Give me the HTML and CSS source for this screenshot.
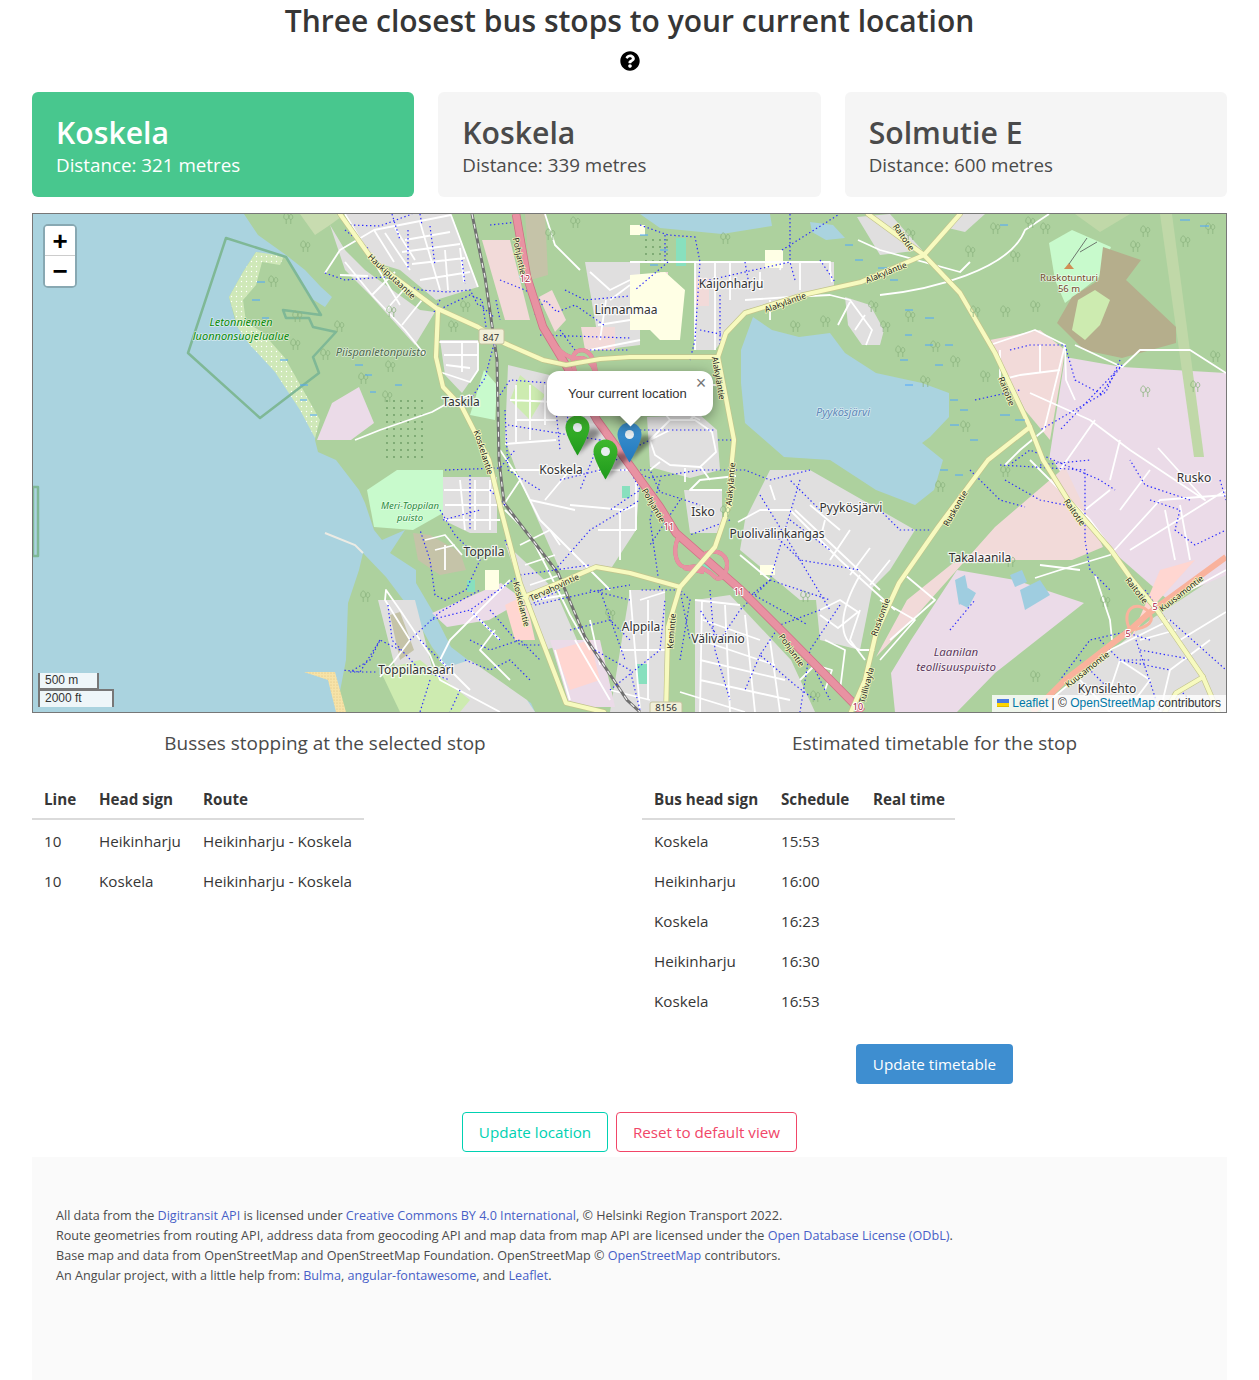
FILE: index.html
```html
<!DOCTYPE html>
<html lang="en">
<head>
  <meta charset="UTF-8">
  <meta name="viewport" content="width=device-width, initial-scale=1.0">
  <title>Bus stops</title>
  <link rel="stylesheet" href="styles.css">
</head>
<body>
  <div class="page">
    <h1 class="title">Three closest bus stops to your current location</h1>
    <div class="help">
      <svg class="help-icon" viewBox="0 0 512 512"><path d="M504 256c0 136.997-111.043 248-248 248S8 392.997 8 256C8 119.083 119.043 8 256 8s248 111.083 248 248zM262.655 90c-54.497 0-89.255 22.957-116.549 63.758-3.536 5.286-2.353 12.415 2.715 16.258l34.699 26.31c5.205 3.947 12.621 3.008 16.665-2.122 17.864-22.658 30.113-35.797 57.303-35.797 20.429 0 45.698 13.148 45.698 32.958 0 14.976-12.363 22.667-32.534 33.976C247.128 238.528 216 254.941 216 296v4c0 6.627 5.373 12 12 12h56c6.627 0 12-5.373 12-12v-1.333c0-28.462 83.186-29.647 83.186-106.667 0-58.002-60.165-102-116.531-102zM256 338c-25.365 0-46 20.635-46 46 0 25.364 20.635 46 46 46s46-20.636 46-46c0-25.365-20.635-46-46-46z"/></svg>
    </div>

    <div class="stops">
      <div class="stop selected">
        <div class="stop-name">Koskela</div>
        <div class="stop-dist">Distance: 321 metres</div>
      </div>
      <div class="stop">
        <div class="stop-name">Koskela</div>
        <div class="stop-dist">Distance: 339 metres</div>
      </div>
      <div class="stop">
        <div class="stop-name">Solmutie E</div>
        <div class="stop-dist">Distance: 600 metres</div>
      </div>
    </div>

    <div class="map">
      <svg class="tiles" viewBox="33 214 1193 498">
        <defs>
          <symbol id="tree" viewBox="0 0 12 14" overflow="visible">
            <path class="tree" d="M3.5 13V8M3.5 8C1 8 .5 6 1 4 1.5 2 2.5 1 3.5 1 4.5 1 5.5 2 6 4 6.5 6 6 8 3.5 8zM8.5 13V8M8.5 8C6.5 8 6.3 6 7 4.5 7.5 3 8 2.5 8.5 2.5 9 2.5 10 3 10.5 4.5 11 6 10.5 8 8.5 8z"/>
          </symbol>
          <symbol id="pin" viewBox="0 0 25 41" overflow="visible">
            <path d="M12.5.5C5.9.5.5 5.9.5 12.5.5 21 12.5 40.5 12.5 40.5S24.5 21 24.5 12.5C24.5 5.9 19.1.5 12.5.5z"/>
            <circle class="pin-dot" cx="12.5" cy="12.5" r="4.5"/>
          </symbol>
          <linearGradient id="green-pin" x1="0" y1="0" x2="0" y2="1">
            <stop offset="0" stop-color="#3fb82e"/>
            <stop offset="1" stop-color="#1f9a1c"/>
          </linearGradient>
          <linearGradient id="blue-pin" x1="0" y1="0" x2="0" y2="1">
            <stop offset="0" stop-color="#3f93d1"/>
            <stop offset="1" stop-color="#2178bd"/>
          </linearGradient>
          <filter id="blur"><feGaussianBlur stdDeviation="2"/></filter>
          <pattern id="dots" width="7" height="7" patternUnits="userSpaceOnUse"><rect width="7" height="7" fill="#add19e"/><circle cx="2" cy="2" r=".7" fill="#2f6a2f"/></pattern>
          <pattern id="marsh" width="5" height="5" patternUnits="userSpaceOnUse"><rect width="5" height="5" fill="#cfe8b8"/><circle cx="1.5" cy="1.5" r=".7" fill="#fff"/></pattern>
          <pattern id="sand" width="3" height="3" patternUnits="userSpaceOnUse"><rect width="3" height="3" fill="#f7e3a8"/><circle cx="1" cy="1" r=".4" fill="#b89a50"/></pattern>
        </defs>

        <rect class="wood" x="33" y="214" width="1193" height="498"/>

        <!-- water -->
        <path class="water" d="M33 214H244L258 235 286 255 305 270 321 287 332 297 325 307 309 297 286 258 256 252 243 272 229 297 237 327 262 340 275 350 298 383 317 417 315 440 318 452 336 460 359 490 365 503 374 530 382 540 405 530 390 553 416 570 416 583 436 617 451 647 485 673 531 703 535 712H33z"/>
        <path class="wood" d="M363 553 386 577 413 613 432 647 447 667 462 690 520 712H336L346 660 348 603 359 570z"/>
        <path class="pier" d="M325 533 355 545 363 553"/>
        <path class="water" d="M640 214H770L772 226 722 234 660 228z"/>
        <path class="water" d="M810 222 833 225 845 238 826 240 812 232z"/>
        <path class="water" d="M753 317 772 330 799 337 830 333 845 353 876 373 922 383 949 393 949 417 930 437 922 443 943 460 934 490 915 505 876 490 830 460 784 457 745 423 741 383 741 350z"/>
        <path class="water" d="M1100 270 1108 272 1111 277 1103 276zM1105 330h5l4 18-8 1z"/>
        <path class="marsh" d="M256 252 284 256 280 265 262 262 256 285 243 300 246 322 262 332 285 358 302 388 320 420 315 438 300 410 275 372 250 345 238 328 229 297 243 272z"/>
        <path class="light" d="M330 225 345 214H300L315 235z"/>

        <!-- land use -->
        <path class="res" d="M345 214H451L478 287 436 300 400 270 374 262z"/>
        <path class="res" d="M330 225 345 250 365 270 420 310 435 312 415 345 370 295 345 270z"/>
        <path class="res" d="M440 340H478L478 370 462 393 445 375z"/>
        <path class="res" d="M508 365 570 380 600 430 640 480 636 530 610 570 560 570 520 480 505 440z"/>
        <path class="res" d="M647 417 700 415 717 430 720 470 690 478 650 467z"/>
        <path class="res" d="M684 490 722 490 722 533 690 533z"/>
        <path class="res" d="M770 470 810 470 915 530 890 570 860 600 800 600 740 550 745 520z"/>
        <path class="res" d="M695 600 730 595 791 660 815 712H695z"/>
        <path class="res" d="M630 590 665 590 665 712H610z"/>
        <path class="res" d="M585 262H640V345L600 350z"/>
        <path class="res" d="M695 262H834V290L790 300 745 310 715 350H695z"/>
        <path class="res" d="M857 217 890 214 922 250 880 255z"/>
        <path class="res" d="M845 297 870 305 884 330 880 345 862 345 848 325z"/>
        <path class="res" d="M443 477 497 477 497 533 470 533 443 520z"/>
        <path class="res" d="M505 543 555 590 577 640 545 650 525 600z"/>
        <path class="res" d="M378 600 415 600 432 667 395 667z"/>
        <path class="res" d="M416 677 470 660 527 700 535 712H420z"/>
        <path class="res" d="M1050 700 1150 620 1226 570V712H1040z"/>
        <path class="res" d="M815 590 875 575 860 650 820 640z"/>
        <path class="res" d="M1182 395H1226V440H1195z"/>
        <path class="res" d="M960 214 985 214 965 232 948 228z"/>

        <path class="ind" d="M332 403 359 387 374 423 351 440 317 440z"/>
        <path class="ind" d="M432 613 501 583 524 600 489 620 447 627z"/>
        <path class="ind" d="M550 640 600 640 615 707 570 707z"/>
        <path class="ind" d="M891 673 911 640 957 570 1015 580 1084 603 995 673 957 712H895z"/>
        <path class="ind" d="M1053 460H1226V575L1168 600 1103 543z"/>
        <path class="ind" d="M1065 357 1122 367 1226 373V460H1049z"/>

        <path class="com" d="M876 657 915 617 995 527 1065 467 1103 547 1072 560 1015 560 953 563 907 600z"/>
        <path class="com" d="M990 340 1040 330 1065 350 1062 370 1050 440 1025 410z"/>
        <path class="com" d="M482 240 510 240 530 320 505 320z"/>
        <path class="com" d="M539 297 552 290 566 320 555 332z"/>
        <path class="com" d="M581 327 615 327 615 350 585 350z"/>
        <path class="com" d="M695 278h14v28h-14zM660 272h8v5h-8z"/>
        <path class="ret" d="M1130 640 1160 570 1195 560 1150 610z"/>
        <path class="ret" d="M505 605 525 595 535 640 515 640z"/>
        <path class="ret" d="M555 650 590 640 600 680 570 690z"/>

        <path class="park" d="M367 490 397 470 443 470 443 513 413 530 374 527z"/>
        <path class="park" d="M1049 243 1072 230 1111 247 1099 277 1065 303 1055 280z"/>
        <path class="park" d="M484 370 497 385 495 420 470 415z"/>
        <path class="grass" d="M380 670 420 660 470 700 460 712H400z"/>
        <path class="grass" d="M520 375 545 395 530 420 510 400z"/>
        <path class="strip" d="M1160 214 1172 214 1204 457 1194 457z"/>
        <path class="strip" d="M1075 214H1130L1100 232z"/>
        <path class="quarry" d="M1103 247 1141 260 1126 280 1176 327 1176 343 1122 358 1084 350 1057 323 1072 297 1099 280z"/>
        <path class="grass" d="M1078 300 1095 290 1110 300 1100 325 1085 340 1072 330z"/>
        <path class="brown" d="M525 214H545L548 275 530 280z"/>
        <path class="brown" d="M413 533 430 535 460 552 466 570 440 575 418 560z"/>
        <path class="brown" d="M390 615 400 612 414 650 400 660z"/>
        <path class="school" d="M630 275 665 272 685 290 680 340 660 340 650 330 630 330z"/>
        <path class="sport" d="M676 238h10v28h-10zM637 664h10v20h-10zM622 486h8v12h-8zM702 560h12v10h-12zM467 580h8v12h-8z"/>
        <path class="school" d="M765 250h18v18h-18zM598 460h12v12h-12zM760 565h15v10h-15zM485 570h14v20h-14zM630 225h15v10h-15z"/>
        <path class="sand" d="M304 672H335L346 712H336L328 680z"/>
        <path class="water-mid" d="M955 580l10-5 4 20-10 10zM968 588l8 5-8 15-8-4zM1020 590l20-10 10 15-25 15zM1010 575l12-5 5 12-12 5z"/>
        <rect x="382" y="400" width="46" height="60" fill="url(#dots)"/>
        <rect x="640" y="238" width="30" height="24" fill="url(#dots)"/>

        <!-- protected area -->
        <path class="reserve" d="M226 238 286 257 309 295 321 315 283 310 286 318 309 318 313 327 336 332 313 357 319 373 260 418 188 353z"/>
        <path class="reserve" d="M33 487 38 487 38 556 33 556z"/>

        <!-- streets -->
        <g class="str">
          <path d="M325 273 340 250 374 230 451 215 478 287"/>
          <path d="M345 214 400 305M374 230 394 262M385 233 410 270M395 228 415 260M420 222 440 290M405 240 450 232M402 252 460 244M412 264 465 258M420 280 470 272M445 250 448 290M460 248 464 282"/>
          <path d="M345 262 372 295 405 330 425 355M372 295 395 272M386 310 408 285M402 325 422 300M340 275 368 276"/>
          <path d="M355 440 380 430 432 412 450 402 470 395"/>
          <path d="M436 342H478V370L470 382 440 372M444 355H478M446 365 470 368M462 342V372"/>
          <path d="M510 400 556 402M516 385V442M530 385V440M545 385V425M516 420H556M505 444 556 440M510 470 560 470"/>
          <path d="M500 450 520 480 540 520 580 560 610 590M520 480 500 510M545 500 570 470M570 505 625 510 636 505M600 470 636 470M598 530 636 530M636 480V530M620 510V560"/>
          <path d="M680 385H720M680 410 700 420M670 430 650 440 655 455 670 465 700 467 716 452 712 432 695 420 670 420 650 440M670 420 662 410M690 420 700 410M660 462 650 470M685 468V482M700 466 710 480"/>
          <path d="M736 476 700 480 690 490H722M738 522 760 510 790 510 840 560 895 610M795 510 880 590M810 505 840 530M825 520 820 540M850 530 830 560M870 548 850 575M890 560 870 585M770 485 775 500M740 555 770 580"/>
          <path d="M695 600 740 605M703 620 760 640M700 640 775 665M700 660 785 680M700 680 790 700M702 600 700 712M725 605 730 712M745 615 755 712M770 640 780 712M680 692 745 712"/>
          <path d="M630 590 640 710M620 650 665 650M610 690 650 700M640 600 665 592M648 600V700"/>
          <path d="M630 262H830V270L832 282M695 262V350M715 262V350M730 262 730 300M800 262V290M780 270 782 262M760 272V290M745 300 790 297 830 295 850 300 872 330 866 345M850 302 838 325M865 315 855 330M770 300V320"/>
          <path d="M610 300 630 285M590 272 610 290 630 280M598 325 630 320M590 350 640 340M600 340 606 300M580 270 555 245 545 214"/>
          <path d="M880 295C930 290 1010 270 1025 230L1049 214"/>
          <path d="M858 240 880 250 960 272 970 262"/>
          <path d="M990 345 1035 330 1065 345 1066 380 1075 400M1000 350V380L1020 375 1060 370M1040 345V372"/>
          <path d="M1075 345 1122 367 1140 350 1190 350 1226 373"/>
          <path d="M1065 345 1044 430 1020 450 1005 465"/>
          <path d="M1030 393 1090 420 1130 450 1205 500 1158 448M1095 420 1060 470M1120 440 1110 480M1150 470 1120 510"/>
          <path d="M1030 460 1090 520 1120 560M1085 510 1110 490M1130 550 1226 490M1226 495 1160 500 1110 555 1060 570 1035 578"/>
          <path d="M1040 565 1080 570M1095 575 1110 620 1112 640M1165 510 1175 560M1180 505 1190 560"/>
          <path d="M860 610 850 640 865 660M820 610 840 600 858 612 838 628 820 615M825 640 845 650 840 690M800 680 815 665 832 670 825 690M860 575C840 610 835 640 860 650L875 650"/>
          <path d="M880 600 915 620 880 660M905 575 935 600 890 640"/>
          <path d="M1050 700 1110 650 1170 620M1110 690 1120 660 1150 680 1135 700M1160 712 1170 670 1210 640M1080 680 1110 712M1180 640 1226 612M1190 590 1226 570M1140 640 1176 630"/>
          <path d="M380 677 395 660 410 640 385 600 386 590 400 610 430 655 440 680 500 712"/>
          <path d="M444 490H498M445 505H498M460 480 465 530M475 480V530M490 480V530M445 520H500"/>
          <path d="M505 510 530 535 548 570 570 615 590 650M520 545 550 530M525 565 555 555M530 585 560 575M536 600 565 595M550 530 560 545M530 500 575 510"/>
          <path d="M575 640 610 700M590 620 600 665M555 650 570 700"/>
          <path d="M510 580 450 640 440 660 470 690M495 630 480 650 510 680M470 610 500 640"/>
          <path d="M425 540 445 535 462 555M435 550 455 545M445 570V545"/>
        </g>

        <!-- railway -->
        <path class="rail-under" d="M472 214 485 277 497 360 499 460 504 503 558 573 585 637 627 700 640 712"/>
        <path class="rail" d="M472 214 485 277 497 360 499 460 504 503 558 573 585 637 627 700 640 712"/>

        <!-- footpaths -->
        <g class="fp">
          <path d="M345 230 370 250M350 225 380 226 412 214M325 273 345 280 385 277 420 290 448 292 470 290 478 305M480 305 495 318M408 230V270M430 226 435 265M462 260 465 284"/>
          <path d="M392 214 400 240M420 214 422 225M440 300 434 312 470 295 482 300 488 340M495 340 485 378 470 400"/>
          <path d="M490 225 518 222M500 280 525 290 540 300M496 300 500 320M535 315 545 300 557 312 575 305 604 325M565 290 585 300 630 296M540 335 630 338M560 330 575 350 630 350"/>
          <path d="M640 225 668 235 695 237 700 262 695 340 690 360M668 262 635 290M665 235 665 262M790 214V262M782 250 838 215M795 280 790 262 700 282M720 295 720 350M700 330 725 335M745 262 750 290M820 260 835 282"/>
          <path d="M500 395 510 380 575 385 595 410M508 425 600 440 580 490M505 410 508 470 540 490M555 400 560 450M570 385 567 425M560 480 600 470 640 445 650 440M620 470 650 470 660 492 700 505"/>
          <path d="M640 430H690 716M718 440 732 440 735 470M630 470 650 478 700 470 745 470 770 480M770 480 810 470M660 480 650 520 660 590M730 520 690 535M680 500 650 545"/>
          <path d="M760 495 800 560 830 610M820 510 790 480M770 530 800 560 860 570M790 520 830 550M800 480 770 580 745 600M770 580 740 610 720 640 700 610M745 590 808 625M770 580 830 600M880 510 900 530 930 530M840 605 810 650 800 712"/>
          <path d="M820 610 780 625 760 655 795 685 815 700M760 655 745 690"/>
          <path d="M1010 350 1030 345 1065 345 1075 380 1103 395M975 400 1020 390M1100 395 1122 365 1060 430M1012 463 1030 450 1100 480 1115 490M1000 465 1085 470 1085 540 1090 570 1110 590"/>
          <path d="M1120 360 1106 392 1040 430M1145 590 1170 625M1150 500 1180 510 1175 530 1195 545 1226 530M1220 480 1226 500M1190 500 1145 485 1130 460"/>
          <path d="M1150 640 1125 632 1090 640 1060 680M1136 640 1160 712M1120 660 1170 670M1170 620 1226 670M1180 690 1200 710M1080 660 1110 690M1100 640 1120 660 1150 660M1140 650 1195 660"/>
          <path d="M440 510 455 535 480 560 466 590 445 600 435 595 430 560 420 530M443 520 480 510M470 475 470 530M445 470 500 468 515 450"/>
          <path d="M490 490 505 505M505 540 520 575 470 610 430 620M520 575 590 565M500 640 470 610M490 610 520 645 545 645M535 605 600 590 630 585M590 590 630 600M570 630 610 620 630 640"/>
          <path d="M400 650 380 640 370 660 350 672M380 640 360 672 342 670M388 605 392 640 420 670 450 680M410 640 440 612 480 590M420 640 450 670M470 640 490 650 520 640 540 660M465 660 490 670 510 660 530 680M430 680 420 712M460 690 450 712M350 672H378"/>
          <path d="M555 570 590 530 640 500M560 590 520 610M600 590 625 660M595 650 630 670 640 710M610 690 660 650 665 600M680 660 690 600 680 590 640 590M710 590 715 650 730 700"/>
          <path d="M630 470 640 490 610 510M680 590 690 640"/>
          <path d="M810 660 830 700M950 630 975 600M970 470 1000 500 1025 507M1005 480 1040 500 1065 505M1040 465 1090 460"/>
        </g>

        <!-- motorway -->
        <g id="mw-roads">
          <path d="M516 214 527 277 543 327 573 377 597 420 660 507 676 533 741 590 791 640 862 712"/>
          <path class="ramp" d="M543 327C556 350 566 360 582 358 598 362 600 385 597 420"/>
          <path class="ramp" d="M575 372C570 356 574 350 583 350 592 352 596 362 596 380"/>
          <path class="ramp" d="M678 538C672 552 676 570 690 567 700 565 708 570 716 578"/>
          <path class="ramp" d="M700 558C712 546 728 552 727 566 726 575 722 580 716 578"/>
          <path class="ramp" d="M684 568 704 572"/>
        </g>
        <use class="mw-case" href="#mw-roads"/>
        <use class="mw-fill" href="#mw-roads"/>

        <path class="tr" d="M1226 557 1149 613 1130 630 1065 680 1038 707 1032 712"/>
        <path class="tr-thin" d="M1130 630C1120 610 1136 598 1150 613M1130 630C1150 628 1155 620 1149 613"/>

        <!-- main roads -->
        <g id="sec-roads">
          <path d="M340 214 374 262 436 308 478 327 504 343 543 360 566 365 600 359 630 357H718"/>
          <path d="M438 310 436 357 443 387 462 407 489 460 501 510 520 583 543 643 566 703 604 712"/>
          <path d="M718 357 726 333 745 313 803 295 861 282 924 255 960 214"/>
          <path d="M868 214 924 255 960 293 995 353 1030 427 1043 460 1068 500 1111 550 1130 577 1157 610 1203 677 1218 712"/>
          <path d="M718 357 734 440 732 460 730 503 715 547 680 587 668 627 666 712"/>
          <path d="M680 587 630 573 596 567 566 580 524 597"/>
          <path d="M1030 427 988 460 938 527 899 583 876 633 865 680 851 712"/>
          <path d="M1203 677 1176 693 1165 712"/>
        </g>
        <use class="sec-case" href="#sec-roads"/>
        <use class="sec-fill" href="#sec-roads"/>

        <!-- trees -->
        <g class="trees">
          <use href="#tree" x="283" y="212" width="11" height="13"/>
          <use href="#tree" x="268" y="275" width="11" height="13"/>
          <use href="#tree" x="292" y="310" width="11" height="13"/>
          <use href="#tree" x="334" y="320" width="11" height="13"/>
          <use href="#tree" x="290" y="338" width="11" height="13"/>
          <use href="#tree" x="320" y="348" width="11" height="13"/>
          <use href="#tree" x="382" y="390" width="11" height="13"/>
          <use href="#tree" x="358" y="372" width="11" height="13"/>
          <use href="#tree" x="385" y="360" width="11" height="13"/>
          <use href="#tree" x="448" y="320" width="11" height="13"/>
          <use href="#tree" x="386" y="305" width="11" height="13"/>
          <use href="#tree" x="545" y="228" width="11" height="13"/>
          <use href="#tree" x="570" y="216" width="11" height="13"/>
          <use href="#tree" x="720" y="232" width="11" height="13"/>
          <use href="#tree" x="905" y="228" width="11" height="13"/>
          <use href="#tree" x="1025" y="216" width="11" height="13"/>
          <use href="#tree" x="1010" y="250" width="11" height="13"/>
          <use href="#tree" x="970" y="305" width="11" height="13"/>
          <use href="#tree" x="1000" y="305" width="11" height="13"/>
          <use href="#tree" x="1030" y="300" width="11" height="13"/>
          <use href="#tree" x="965" y="245" width="11" height="13"/>
          <use href="#tree" x="905" y="310" width="11" height="13"/>
          <use href="#tree" x="895" y="345" width="11" height="13"/>
          <use href="#tree" x="930" y="340" width="11" height="13"/>
          <use href="#tree" x="920" y="375" width="11" height="13"/>
          <use href="#tree" x="960" y="420" width="11" height="13"/>
          <use href="#tree" x="980" y="370" width="11" height="13"/>
          <use href="#tree" x="1180" y="235" width="11" height="13"/>
          <use href="#tree" x="1130" y="240" width="11" height="13"/>
          <use href="#tree" x="1190" y="380" width="11" height="13"/>
          <use href="#tree" x="935" y="480" width="11" height="13"/>
          <use href="#tree" x="1005" y="555" width="11" height="13"/>
          <use href="#tree" x="1030" y="670" width="11" height="13"/>
          <use href="#tree" x="800" y="590" width="11" height="13"/>
          <use href="#tree" x="810" y="690" width="11" height="13"/>
          <use href="#tree" x="360" y="590" width="11" height="13"/>
          <use href="#tree" x="605" y="608" width="11" height="13"/>
          <use href="#tree" x="1040" y="222" width="11" height="13"/>
          <use href="#tree" x="990" y="222" width="11" height="13"/>
          <use href="#tree" x="1205" y="222" width="11" height="13"/>
          <use href="#tree" x="1140" y="225" width="11" height="13"/>
          <use href="#tree" x="868" y="300" width="11" height="13"/>
          <use href="#tree" x="880" y="320" width="11" height="13"/>
          <use href="#tree" x="950" y="355" width="11" height="13"/>
          <use href="#tree" x="1210" y="350" width="11" height="13"/>
          <use href="#tree" x="1140" y="385" width="11" height="13"/>
          <use href="#tree" x="790" y="320" width="11" height="13"/>
          <use href="#tree" x="820" y="315" width="11" height="13"/>
          <use href="#tree" x="460" y="300" width="11" height="13"/>
          <use href="#tree" x="300" y="240" width="11" height="13"/>
          <use href="#tree" x="1000" y="465" width="11" height="13"/>
          <use href="#tree" x="1100" y="595" width="11" height="13"/>
          <use href="#tree" x="720" y="505" width="11" height="13"/>
        </g>

        <!-- wetland marks -->
        <path class="wet" d="M257 282h8M252 300h8M262 318h7M280 360h8M300 385h8M310 415h7M300 400h7M355 365h8M365 375h7M370 392h6M395 385h7M845 245h8M855 260h8M878 268h9M890 280h8M905 310h8M925 318h9M905 335h7M925 345h8M945 345h8M900 360h8M935 365h8M905 385h8M950 400h8M960 410h8M950 425h9M970 440h8M940 470h8M955 475h8M1000 225h8M1180 220h10M1200 226h9M640 235h8M660 250h8M650 265h8M1000 415h10M1015 420h10"/>

        <!-- road labels -->
        <g class="road-lbl">
          <text transform="rotate(78 520 256)" x="520" y="256">Pohjantie</text>
          <text transform="rotate(43 392 276)" x="392" y="276">Haukiputaantie</text>
          <text transform="rotate(72 484 452)" x="484" y="452">Koskelantie</text>
          <text transform="rotate(76 522 604)" x="522" y="604" >Koskelantie</text>
          <text transform="rotate(-25 554 587)" x="554" y="587">Tervahovintie</text>
          <text transform="rotate(-20 785 302)" x="785" y="302">Alakyläntie</text>
          <text transform="rotate(-22 886 272)" x="886" y="272">Alakyläntie</text>
          <text transform="rotate(80 719 378)" x="719" y="378">Alakyläntie</text>
          <text transform="rotate(-85 730 484)" x="730" y="484">Alakyläntie</text>
          <text transform="rotate(55 904 237)" x="904" y="237">Raitotie</text>
          <text transform="rotate(68 1007 391)" x="1007" y="391">Raitotie</text>
          <text transform="rotate(55 1075 512)" x="1075" y="512">Raitotie</text>
          <text transform="rotate(52 1137 590)" x="1137" y="590">Raitotie</text>
          <text transform="rotate(60 654 505)" x="654" y="505">Pohjantie</text>
          <text transform="rotate(55 792 650)" x="792" y="650">Pohjantie</text>
          <text transform="rotate(-60 955 508)" x="955" y="508">Ruskontie</text>
          <text transform="rotate(-70 880 617)" x="880" y="617">Ruskontie</text>
          <text transform="rotate(-85 671 631)" x="671" y="631">Kemintie</text>
          <text transform="rotate(-75 866 685)" x="866" y="685">Tullivayla</text>
          <text transform="rotate(-38 1087 669)" x="1087" y="669">Kuusamontie</text>
          <text transform="rotate(-38 1181 593)" x="1181" y="593">Kuusamontie</text>
        </g>

        <!-- shields -->
        <g class="refs">
          <text x="525" y="278">12</text>
          <text x="669" y="526">11</text>
          <text x="739" y="591">11</text>
          <text x="1128" y="633">5</text>
          <text x="1155" y="606">5</text>
          <text x="858" y="706">10</text>
        </g>
        <rect class="shield" x="479" y="329" width="25" height="15" rx="2"/>
        <rect class="shield" x="650" y="702" width="32" height="15" rx="2"/>
        <text class="shield-txt" x="491" y="337">847</text>
        <text class="shield-txt" x="666" y="707">8156</text>

        <!-- place labels -->
        <g class="place">
          <text x="461" y="401">Taskila</text>
          <text x="626" y="309">Linnanmaa</text>
          <text x="731" y="283">Kaijonharju</text>
          <text x="1194" y="477">Rusko</text>
          <text x="561" y="469">Koskela</text>
          <text x="703" y="511">Isko</text>
          <text x="851" y="507">Pyykösjärvi</text>
          <text x="777" y="533">Puolivälinkangas</text>
          <text x="980" y="557">Takalaanila</text>
          <text x="484" y="551">Toppila</text>
          <text x="641" y="626">Alppila</text>
          <text x="718" y="638">Välivainio</text>
          <text x="416" y="669">Toppilansaari</text>
          <text x="1107" y="688">Kynsilehto</text>
        </g>
        <g class="nature">
          <text x="241" y="321">Letonniemen</text>
          <text x="241" y="335">luonnonsuojelualue</text>
        </g>
        <text class="park-lbl" x="381" y="351">Piispanletonpuisto</text>
        <g class="park-small">
          <text x="410" y="505">Meri-Toppilan</text>
          <text x="410" y="517">puisto</text>
        </g>
        <text class="lake-lbl" x="843" y="411">Pyykösjärvi</text>
        <g class="ind-lbl">
          <text x="956" y="651">Laanilan</text>
          <text x="956" y="666">teollisuuspuisto</text>
        </g>
        <path class="peak" d="M1069 263l5 6h-10z"/>
        <path class="lift" d="M1069 264 1087 238M1080 252 1097 242"/>
        <g class="peak-lbl">
          <text x="1069" y="277">Ruskotunturi</text>
          <text x="1069" y="288">56 m</text>
        </g>

        <!-- markers -->
        <g class="shadows">
          <path d="M577 455 598 436 601 431 594 428 586 430z"/>
          <path d="M606 479 627 460 630 455 623 452 615 454z"/>
          <path d="M629 462 650 443 653 438 646 435 638 437z"/>
        </g>
        <use class="pin pin-green" href="#pin" x="565" y="415" width="25" height="41"/>
        <use class="pin pin-green" href="#pin" x="593" y="439" width="25" height="41"/>
        <use class="pin pin-blue" href="#pin" x="617" y="422" width="25" height="41"/>
      </svg>

      <div class="zoom">
        <a class="zoom-btn zoom-in">+</a>
        <a class="zoom-btn zoom-out">&minus;</a>
      </div>

      <div class="popup">
        <div class="popup-body">Your current location</div>
        <div class="popup-tip-box"><div class="popup-tip"></div></div>
        <a class="popup-close">&times;</a>
      </div>

      <div class="scale">
        <div class="scale-line">500 m</div>
        <div class="scale-line second">2000 ft</div>
      </div>

      <div class="attribution">
        <svg class="flag" viewBox="0 0 12 8"><path fill="#4C7BE1" d="M0 0h12v4H0z"/><path fill="#FFD500" d="M0 4h12v3H0z"/><path fill="#E0BC00" d="M0 7h12v1H0z"/></svg>
        <a>Leaflet</a> | © <a>OpenStreetMap</a> contributors
      </div>
    </div>

    <div class="columns">
      <div class="column">
        <h2 class="subtitle">Busses stopping at the selected stop</h2>
        <table class="table table-left">
          <thead>
            <tr><th class="c-line">Line</th><th class="c-sign">Head sign</th><th class="c-route">Route</th></tr>
          </thead>
          <tbody>
            <tr><td>10</td><td>Heikinharju</td><td>Heikinharju - Koskela</td></tr>
            <tr><td>10</td><td>Koskela</td><td>Heikinharju - Koskela</td></tr>
          </tbody>
        </table>
      </div>
      <div class="column">
        <h2 class="subtitle">Estimated timetable for the stop</h2>
        <table class="table table-right">
          <thead>
            <tr><th class="c-bus">Bus head sign</th><th class="c-sched">Schedule</th><th class="c-real">Real time</th></tr>
          </thead>
          <tbody>
            <tr><td>Koskela</td><td>15:53</td><td></td></tr>
            <tr><td>Heikinharju</td><td>16:00</td><td></td></tr>
            <tr><td>Koskela</td><td>16:23</td><td></td></tr>
            <tr><td>Heikinharju</td><td>16:30</td><td></td></tr>
            <tr><td>Koskela</td><td>16:53</td><td></td></tr>
          </tbody>
        </table>
        <div class="center">
          <a class="button button-info">Update timetable</a>
        </div>
      </div>
    </div>

    <div class="actions">
      <a class="button button-primary">Update location</a>
      <a class="button button-danger">Reset to default view</a>
    </div>

    <footer class="footer">
      <p>All data from the <a>Digitransit API</a> is licensed under <a>Creative Commons BY 4.0 International</a>, © Helsinki Region Transport 2022.</p>
      <p>Route geometries from routing API, address data from geocoding API and map data from map API are licensed under the <a>Open Database License (ODbL)</a>.</p>
      <p>Base map and data from OpenStreetMap and OpenStreetMap Foundation. OpenStreetMap © <a>OpenStreetMap</a> contributors.</p>
      <p>An Angular project, with a little help from: <a>Bulma</a>, <a>angular-fontawesome</a>, and <a>Leaflet</a>.</p>
    </footer>
  </div>
</body>
</html>
```

FILE: styles.css
```css
* {
  margin: 0;
  padding: 0;
  box-sizing: border-box;
}

body {
  font-family: "Open Sans", "Noto Sans", sans-serif;
  font-size: 15.2px;
  line-height: 24px;
  color: #4a4a4a;
  background: #fff;
}

.page {
  padding: 3px 32px 0;
}

.title {
  font-size: 30px;
  line-height: 36px;
  font-weight: 600;
  color: #363636;
  text-align: center;
}

.help {
  height: 53px;
  padding-top: 12px;
  text-align: center;
}

.help-icon {
  display: block;
  width: 20px;
  height: 20px;
  margin: 0 auto;
}

/* stop cards */
.stops {
  display: grid;
  grid-template-columns: repeat(3, 1fr);
  gap: 24px;
  margin-bottom: 16px;
}

.stop {
  height: 105px;
  padding: 20px 24px;
  background: #f5f5f5;
  border-radius: 6px;
}

.stop.selected {
  background: #48c78e;
  color: #fff;
}

.stop-name {
  font-size: 30.2px;
  line-height: 41px;
  font-weight: 600;
}

.stop-dist {
  font-size: 18.8px;
  line-height: 25px;
}

/* map */
.map {
  position: relative;
  height: 500px;
  border: 1px solid #777;
  overflow: hidden;
  background: #aad3df;
}

.tiles {
  display: block;
  width: 100%;
  height: 100%;
}

.wood { fill: #add19e; }
.water { fill: #aad3df; }
.water-mid { fill: #9fcde0; }
.marsh { fill: url(#marsh); }
.light { fill: #c8dcb0; }
.res { fill: #e0dfdf; }
.ind { fill: #ebdbe8; }
.com { fill: #f2dad9; }
.ret { fill: #ffd6d1; }
.park { fill: #c8facc; }
.grass { fill: #cdebb0; }
.strip { fill: #c0d8a8; }
.quarry { fill: #b5ae8c; }
.brown { fill: #c5c3a8; }
.school { fill: #ffffe5; }
.sport { fill: #88e0be; }
.sand { fill: url(#sand); }

.pier {
  fill: none;
  stroke: #ecebe4;
  stroke-width: 2;
}

.reserve {
  fill: none;
  stroke: #7fb896;
  stroke-width: 2.5;
  stroke-linejoin: round;
}

.str path {
  fill: none;
  stroke: #fff;
  stroke-width: 1.8;
  stroke-linejoin: round;
}

.fp path {
  fill: none;
  stroke: #2a2aff;
  stroke-width: 1.2;
  stroke-dasharray: 1.4 2.6;
}

.rail-under {
  fill: none;
  stroke: #707070;
  stroke-width: 3;
}

.rail {
  fill: none;
  stroke: #eee;
  stroke-width: 1.2;
  stroke-dasharray: 5 5;
}

#mw-roads path { fill: none; stroke-linejoin: round; }
#mw-roads .ramp { stroke-width: 4; }
.mw-case { stroke: #cf6f85; stroke-width: 8.5; }
.mw-fill { stroke: #e892a2; stroke-width: 7; }

.tr {
  fill: none;
  stroke: #f9b29c;
  stroke-width: 6;
}

.tr-thin {
  fill: none;
  stroke: #f9b29c;
  stroke-width: 3;
}

#sec-roads path { fill: none; stroke-linejoin: round; stroke-linecap: round; }
.sec-case { stroke: #c3c48c; stroke-width: 5.5; }
.sec-fill { stroke: #f7fabf; stroke-width: 4.2; }

.tree {
  fill: none;
  stroke: #8cb47f;
  stroke-width: .9;
}

.wet {
  fill: none;
  stroke: #4da6ff;
  stroke-width: 1;
}

.road-lbl text,
.refs text,
.shield-txt,
.place text,
.nature text,
.park-lbl,
.park-small text,
.lake-lbl,
.ind-lbl text,
.peak-lbl text {
  font-family: "Noto Sans", sans-serif;
  text-anchor: middle;
  dominant-baseline: central;
  paint-order: stroke;
  stroke-linejoin: round;
}

.road-lbl text {
  font-size: 8.5px;
  fill: #222;
  stroke: #f7fabf;
  stroke-width: 1.5px;
}

.refs text {
  font-size: 9px;
  fill: #a5223e;
  stroke: #fff;
  stroke-width: 2px;
}

.shield {
  fill: #f1efd8;
  stroke: #c4c29e;
}

.shield-txt {
  font-size: 9.5px;
  fill: #333;
}

.place text {
  font-size: 12px;
  fill: #333;
  stroke: rgba(255, 255, 255, .75);
  stroke-width: 2.5px;
}

.nature text {
  font-size: 11px;
  font-style: italic;
  fill: #0a8a0a;
  stroke: rgba(255, 255, 255, .55);
  stroke-width: 1.5px;
}

.park-lbl {
  font-size: 11px;
  font-style: italic;
  fill: #4f6a4f;
  stroke: rgba(255, 255, 255, .55);
  stroke-width: 1.5px;
}

.park-small text {
  font-size: 9.5px;
  font-style: italic;
  fill: #2c8a3e;
  stroke: rgba(255, 255, 255, .5);
  stroke-width: 1.5px;
}

.lake-lbl {
  font-size: 11px;
  font-style: italic;
  fill: #5f88b8;
  stroke: rgba(255, 255, 255, .5);
  stroke-width: 1.5px;
}

.ind-lbl text {
  font-size: 11.5px;
  font-style: italic;
  fill: #5d3a5d;
  stroke: rgba(255, 255, 255, .55);
  stroke-width: 1.5px;
}

.peak-lbl text {
  font-size: 9.5px;
  fill: #734a2a;
  stroke: rgba(255, 255, 255, .6);
  stroke-width: 1.5px;
}

.peak { fill: #d08f55; }

.lift {
  fill: none;
  stroke: #555;
  stroke-width: .8;
}

.pin { stroke: none; }
.pin-green { fill: url(#green-pin); }
.pin-blue { fill: url(#blue-pin); }
.pin-dot { fill: #e8eef0; }

.shadows path {
  fill: rgba(0, 0, 0, .4);
  filter: url(#blur);
}

.zoom {
  position: absolute;
  top: 10px;
  left: 10px;
  border: 2px solid rgba(0, 0, 0, .2);
  border-radius: 5px;
  font-family: "Liberation Sans", sans-serif;
  background-clip: padding-box;
}

.zoom-btn {
  display: block;
  width: 30px;
  height: 30px;
  background: #fff;
  color: #000;
  font-size: 26px;
  font-weight: bold;
  line-height: 30px;
  text-align: center;
}

.zoom-in {
  border-bottom: 1px solid #ccc;
  border-radius: 2px 2px 0 0;
}

.zoom-out {
  border-radius: 0 0 2px 2px;
}

.popup {
  position: absolute;
  top: 157px;
  left: 514px;
  width: 166px;
  font-family: "Liberation Sans", sans-serif;
  font-size: 13px;
  color: #333;
}

.popup-body {
  height: 45px;
  padding: 14px 0 0 21px;
  line-height: 18px;
  background: #fff;
  border-radius: 12px;
  box-shadow: 0 3px 14px rgba(0, 0, 0, .4);
}

.popup-tip-box {
  position: absolute;
  top: 45px;
  left: 63px;
  width: 40px;
  height: 20px;
  overflow: hidden;
  pointer-events: none;
}

.popup-tip {
  width: 17px;
  height: 17px;
  margin: -10px auto 0;
  background: #fff;
  box-shadow: 0 3px 14px rgba(0, 0, 0, .4);
  transform: rotate(45deg);
}

.popup-close {
  position: absolute;
  top: 4px;
  right: 4px;
  width: 16px;
  height: 16px;
  color: #757575;
  font-size: 18px;
  line-height: 16px;
  text-align: center;
}

.scale {
  position: absolute;
  left: 5px;
  bottom: 5px;
  font-family: "Liberation Sans", sans-serif;
  font-size: 12px;
  color: #333;
}

.scale-line {
  width: 61px;
  height: 17px;
  padding: 0 5px;
  line-height: 15px;
  border: 2px solid #777;
  border-top: 0;
  background: rgba(255, 255, 255, .8);
}

.scale-line.second {
  width: 76px;
  height: 18px;
  margin-top: -1px;
  border-top: 2px solid #777;
  border-bottom: 0;
}

.attribution {
  position: absolute;
  right: 0;
  bottom: 0;
  height: 17px;
  padding: 0 5px;
  font-family: "Liberation Sans", sans-serif;
  font-size: 12px;
  line-height: 17px;
  color: #333;
  background: rgba(255, 255, 255, .8);
}

.attribution a {
  color: #0078a8;
}

.flag {
  width: 12px;
  height: 8px;
}

/* tables */
.columns {
  display: grid;
  grid-template-columns: 586px 585px;
  gap: 24px;
  padding-top: 18px;
}

.subtitle {
  height: 55px;
  font-size: 18.95px;
  line-height: 24px;
  font-weight: 400;
  text-align: center;
}

.table {
  table-layout: fixed;
  border-collapse: collapse;
  color: #363636;
}

.table-left { width: 332px; }
.table-right { width: 313px; }

.table th {
  height: 33px;
  padding: 0 12px 7px;
  border-bottom: 2px solid #dbdbdb;
  color: #363636;
  font-size: 15.2px;
  font-weight: 700;
  text-align: left;
  white-space: nowrap;
}

.table td {
  height: 40px;
  padding: 3px 12px 0;
  white-space: nowrap;
}

.c-line { width: 55px; }
.c-sign { width: 104px; }
.c-route { width: 173px; }
.c-bus { width: 127px; }
.c-sched { width: 92px; }
.c-real { width: 94px; }

.center {
  padding-top: 25px;
  text-align: center;
}

.button {
  display: inline-block;
  height: 40px;
  padding: 0 8px;
  border: 1px solid transparent;
  border-radius: 4px;
  line-height: 38px;
  text-align: center;
}

.button-info {
  width: 157px;
  background: #3e8ed0;
  color: #fff;
}

.actions {
  display: flex;
  justify-content: center;
  gap: 8px;
  padding-top: 28px;
}

.button-primary {
  width: 146px;
  border-color: #00d1b2;
  color: #00d1b2;
}

.button-danger {
  width: 181px;
  border-color: #f14668;
  color: #f14668;
}

.footer {
  height: 223px;
  margin-top: 5px;
  padding: 49px 24px;
  background: #fafafa;
  font-size: 12.6px;
  line-height: 20px;
}

.footer a {
  color: #485fc7;
}
```
